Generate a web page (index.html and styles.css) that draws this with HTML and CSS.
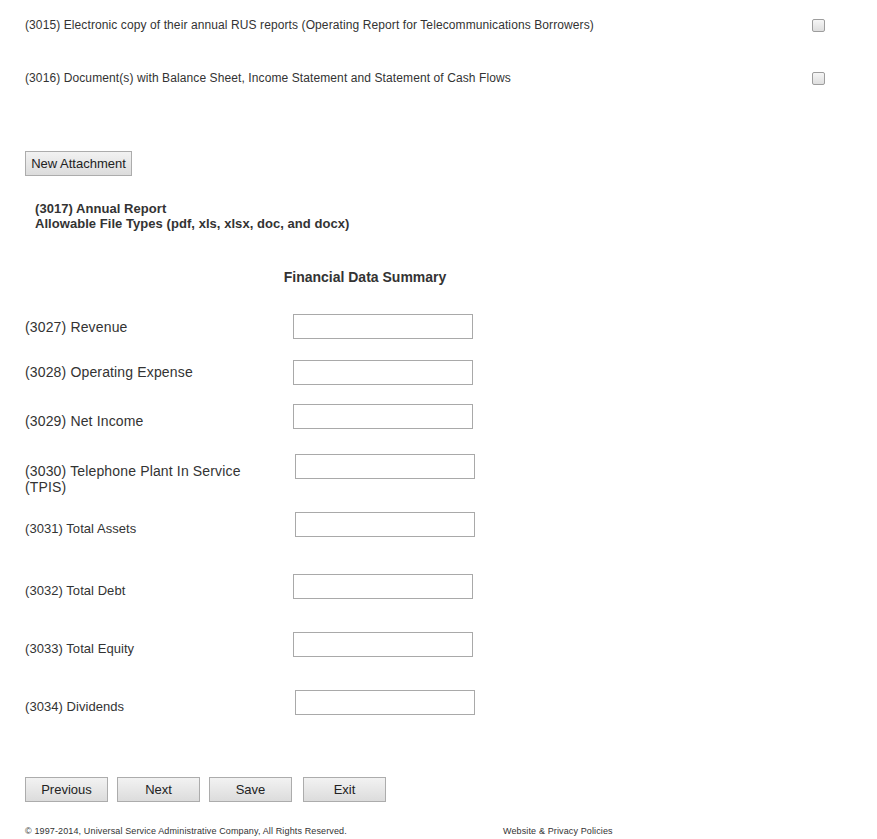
FILE: index.html
```html
<!DOCTYPE html>
<html>
<head>
<meta charset="utf-8">
<link rel="stylesheet" href="styles.css">
</head>
<body>
<div class="page">
  <div class="doc-list">
    <div class="doc-row">
      <span>(3015) Electronic copy of their annual RUS reports (Operating Report for Telecommunications Borrowers)</span>
      <input type="checkbox" class="chk">
    </div>
    <div class="doc-row">
      <span>(3016) Document(s) with Balance Sheet, Income Statement and Statement of Cash Flows</span>
      <input type="checkbox" class="chk">
    </div>
  </div>

  <button class="btn btn-attach">New Attachment</button>

  <div class="attach-info">
    <div>(3017) Annual Report</div>
    <div>Allowable File Types (pdf, xls, xlsx, doc, and docx)</div>
  </div>

  <div class="summary-title">Financial Data Summary</div>

  <div class="fin">
    <div class="fin-row r-rev">
      <label class="lbl big p5">(3027) Revenue</label>
      <input type="text" class="txt">
    </div>
    <div class="fin-row r-opex">
      <label class="lbl big p4">(3028) Operating Expense</label>
      <input type="text" class="txt">
    </div>
    <div class="fin-row r-net">
      <label class="lbl big p9">(3029) Net Income</label>
      <input type="text" class="txt">
    </div>
    <div class="fin-row r-tpis">
      <label class="lbl big p9 narrow">(3030) Telephone Plant In Service (TPIS)</label>
      <input type="text" class="txt shift">
    </div>
    <div class="fin-row r-assets">
      <label class="lbl p9">(3031) Total Assets</label>
      <input type="text" class="txt shift">
    </div>
    <div class="fin-row r-debt">
      <label class="lbl p9">(3032) Total Debt</label>
      <input type="text" class="txt">
    </div>
    <div class="fin-row r-equity">
      <label class="lbl p9">(3033) Total Equity</label>
      <input type="text" class="txt">
    </div>
    <div class="fin-row r-div">
      <label class="lbl p9">(3034) Dividends</label>
      <input type="text" class="txt shift">
    </div>
  </div>

  <div class="nav">
    <button class="btn btn-nav btn-first">Previous</button>
    <button class="btn btn-nav">Next</button>
    <button class="btn btn-nav">Save</button>
    <button class="btn btn-nav btn-last">Exit</button>
  </div>

  <div class="footer">
    <span class="copy">© 1997-2014, Universal Service Administrative Company, All Rights Reserved.</span>
    <span>Website &amp; Privacy Policies</span>
  </div>
</div>
</body>
</html>
```

FILE: styles.css
```css
html, body {
  margin: 0;
  padding: 0;
  background: #fff;
}

body {
  font-family: "Liberation Sans", Arial, sans-serif;
  color: #333;
}

.page {
  padding-left: 25px;
  width: 852px;
  box-sizing: border-box;
}

.doc-list {
  padding-top: 17px;
}

.doc-row {
  display: flex;
  justify-content: space-between;
  align-items: center;
  width: 800px;
  font-size: 12px;
  letter-spacing: 0.1px;
  line-height: 16px;
  height: 16px;
  margin-bottom: 37px;
}

.doc-row:last-child {
  margin-bottom: 0;
}

.chk {
  -webkit-appearance: none;
  appearance: none;
  width: 13px;
  height: 13px;
  margin: 0;
  box-sizing: border-box;
  border: 1px solid #9d9d9d;
  border-radius: 2px;
  background: linear-gradient(#f6f6f6, #dedede);
}

.btn {
  font-family: "Liberation Sans", Arial, sans-serif;
  font-size: 13px;
  color: #222;
  height: 25px;
  box-sizing: border-box;
  border: 1px solid #acacac;
  border-radius: 0;
  background: linear-gradient(#f2f2f2, #dcdcdc);
  padding: 0;
  margin: 0;
  display: block;
}

.btn-attach {
  width: 107px;
  margin-top: 65px;
}

.attach-info {
  margin-top: 25px;
  padding-left: 10px;
  font-size: 13px;
  font-weight: bold;
  line-height: 15px;
  letter-spacing: 0.05px;
}

.summary-title {
  margin-top: 38px;
  width: 680px;
  text-align: center;
  font-size: 14px;
  font-weight: bold;
  line-height: 16px;
}

.fin {
  margin-top: 29px;
}

.fin-row {
  display: flex;
  align-items: flex-start;
}

.lbl {
  width: 268px;
  flex: none;
  font-size: 13px;
  line-height: 16px;
  letter-spacing: 0.05px;
}

.lbl.big {
  font-size: 14px;
  letter-spacing: 0.15px;
}

.lbl.narrow {
  width: 250px;
  margin-right: 18px;
}

.p4 { padding-top: 4px; }
.p5 { padding-top: 5px; }
.p8 { padding-top: 8px; }
.p9 { padding-top: 9px; }

.txt {
  width: 180px;
  height: 25px;
  box-sizing: border-box;
  border: 1px solid #a9a9a9;
  margin: 0;
  padding: 0 3px;
  font-size: 13px;
  font-family: "Liberation Sans", Arial, sans-serif;
}

.txt.shift {
  margin-left: 2px;
}

.r-rev { height: 46px; }
.r-opex { height: 44px; }
.r-net { height: 50px; }
.r-tpis { height: 58px; }
.r-assets { height: 62px; }
.r-debt { height: 58px; }
.r-equity { height: 58px; }
.r-div { height: 25px; }

.nav {
  display: flex;
  gap: 9px;
  margin-top: 62px;
}

.btn-nav {
  width: 83px;
}

.btn-first {
  width: 83px;
}

.btn-last {
  margin-left: 2px;
}

.footer {
  display: flex;
  margin-top: 24px;
  font-size: 9px;
  line-height: 11px;
  letter-spacing: 0.13px;
  color: #333;
}

.copy {
  width: 478px;
}
```
